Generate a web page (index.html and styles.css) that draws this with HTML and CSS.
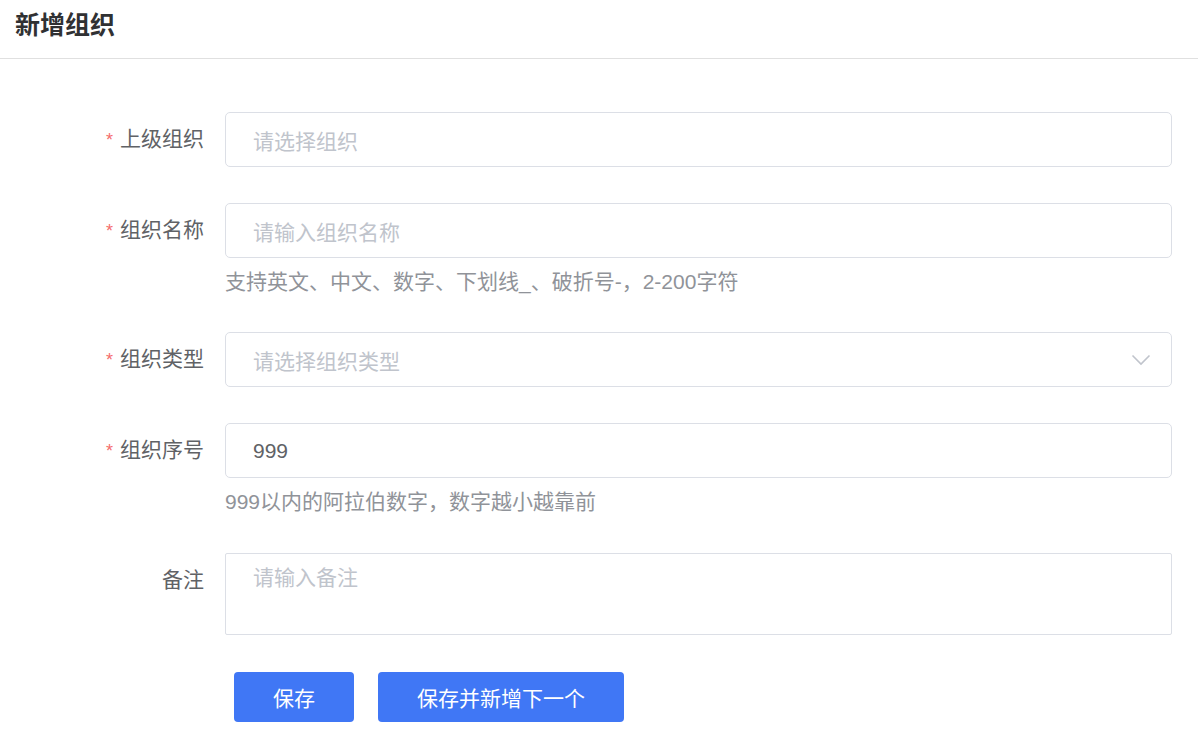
FILE: index.html
```html
<!DOCTYPE html>
<html lang="zh-CN">
<head>
<meta charset="utf-8">
<title>新增组织</title>
<link rel="stylesheet" href="styles.css">
</head>
<body>
<div class="page">
  <header class="page-header">
    <h1 class="page-title">新增组织</h1>
  </header>
  <form class="form">
    <div class="form-item">
      <label class="form-label required">上级组织</label>
      <div class="form-content">
        <div class="input"><span class="placeholder">请选择组织</span></div>
      </div>
    </div>
    <div class="form-item">
      <label class="form-label required">组织名称</label>
      <div class="form-content">
        <div class="input"><span class="placeholder">请输入组织名称</span></div>
        <div class="help">支持英文、中文、数字、下划线_、破折号-，2-200字符</div>
      </div>
    </div>
    <div class="form-item">
      <label class="form-label required">组织类型</label>
      <div class="form-content">
        <div class="input select"><span class="placeholder">请选择组织类型</span>
          <svg class="chevron" width="20" height="12" viewBox="0 0 20 12"><path d="M1.5 1.5 L10 10 L18.5 1.5" fill="none" stroke="#c0c4cc" stroke-width="1.6"/></svg>
        </div>
      </div>
    </div>
    <div class="form-item">
      <label class="form-label required">组织序号</label>
      <div class="form-content">
        <div class="input"><span class="value">999</span></div>
        <div class="help help-tall">999以内的阿拉伯数字，数字越小越靠前</div>
      </div>
    </div>
    <div class="form-item">
      <label class="form-label">备注</label>
      <div class="form-content">
        <div class="textarea"><span class="placeholder">请输入备注</span></div>
      </div>
    </div>
    <div class="form-actions">
      <button type="button" class="btn btn-save">保存</button>
      <button type="button" class="btn btn-next">保存并新增下一个</button>
    </div>
  </form>
</div>
</body>
</html>
```
FILE: styles.css
```css
* { box-sizing: border-box; }
html, body { margin: 0; padding: 0; background: #fff; }
body {
  font-family: "Liberation Sans", "Noto Sans CJK SC", sans-serif;
  color: #606266;
}
.page-header {
  height: 59px;
  border-bottom: 1px solid #e0e0e0;
  padding: 0 15px;
  display: flex;
  align-items: center;
}
.page-title {
  margin: 0;
  font-size: 25px;
  font-weight: bold;
  color: #303133;
  line-height: 1;
  margin-top: -8px;
}
.form {
  padding: 53px 26px 0 0;
}
.form-item {
  display: flex;
  margin-bottom: 36px;
}
.form-label {
  width: 225px;
  flex: none;
  padding-right: 21px;
  text-align: right;
  font-size: 21px;
  line-height: 53px;
  color: #606266;
}
.form-label.required::before {
  content: "*";
  color: #f56c6c;
  margin-right: 7px;
  font-size: 18px;
}
.form-content { flex: 1; }
.input {
  height: 55px;
  border: 1px solid #dcdfe6;
  border-radius: 5px;
  padding: 0 27px;
  display: flex;
  align-items: center;
  font-size: 21px;
}
.select { justify-content: space-between; padding-right: 20px; }
.chevron { display: block; }
.placeholder { color: #c0c4cc; }
.value { color: #606266; }
.help {
  padding-top: 9px;
  line-height: 29px;
  font-size: 21px;
  color: #909399;
}
.help-tall { padding-bottom: 1px; }
.textarea {
  height: 82px;
  border: 1px solid #dcdfe6;
  border-radius: 2px;
  padding: 9px 27px;
  font-size: 21px;
  line-height: 30px;
}
.form-actions {
  display: flex;
  gap: 24px;
  padding-left: 234px;
  margin-top: 37px;
}
.btn {
  height: 50px;
  border: none;
  border-radius: 4px;
  background: #4077f5;
  color: #fff;
  font-family: inherit;
  font-size: 21px;
  padding: 0;
  cursor: pointer;
}
.btn-save { width: 120px; }
.btn-next { width: 246px; }
```
